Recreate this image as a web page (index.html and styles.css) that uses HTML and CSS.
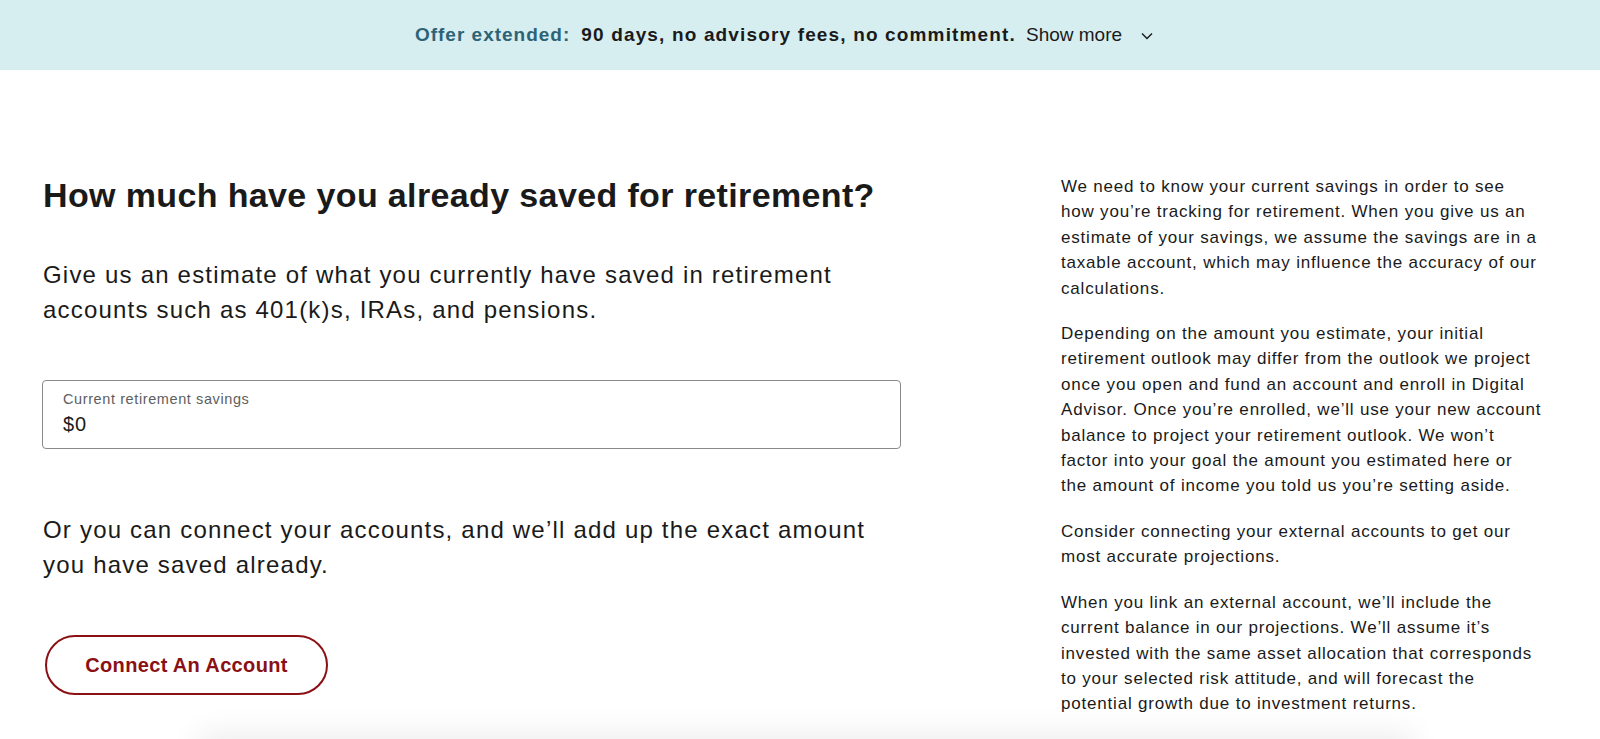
FILE: index.html
```html
<!DOCTYPE html>
<html lang="en">
<head>
<meta charset="utf-8">
<title>Retirement savings</title>
<link rel="stylesheet" href="styles.css">
</head>
<body>
<div class="offer-bar">
  <div class="offer-inner">
    <span class="offer-label">Offer extended:</span>
    <span class="offer-text">90 days, no advisory fees, no commitment.</span>
    <button class="offer-more" type="button">Show more
      <svg class="chev" width="12" height="8" viewBox="0 0 12 8" aria-hidden="true"><path d="M1 1.5 L6 6.5 L11 1.5" fill="none" stroke="#1a1a1a" stroke-width="1.4"/></svg>
    </button>
  </div>
</div>

<main class="page">
  <section class="main-col">
    <h1 class="title">How much have you already saved for retirement?</h1>
    <p class="lead">Give us an estimate of what you currently have saved in retirement<br>accounts such as 401(k)s, IRAs, and pensions.</p>
    <div class="field">
      <span class="field-label">Current retirement savings</span>
      <span class="field-value">$0</span>
    </div>
    <p class="lead lead-2">Or you can connect your accounts, and we’ll add up the exact amount<br>you have saved already.</p>
    <button class="connect-btn" type="button">Connect An Account</button>
  </section>
  <aside class="side-col">
    <p>We need to know your current savings in order to see<br>how you’re tracking for retirement. When you give us an<br>estimate of your savings, we assume the savings are in a<br>taxable account, which may influence the accuracy of our<br>calculations.</p>
    <p>Depending on the amount you estimate, your initial<br>retirement outlook may differ from the outlook we project<br>once you open and fund an account and enroll in Digital<br>Advisor. Once you’re enrolled, we’ll use your new account<br>balance to project your retirement outlook. We won’t<br>factor into your goal the amount you estimated here or<br>the amount of income you told us you’re setting aside.</p>
    <p>Consider connecting your external accounts to get our<br>most accurate projections.</p>
    <p>When you link an external account, we’ll include the<br>current balance in our projections. We’ll assume it’s<br>invested with the same asset allocation that corresponds<br>to your selected risk attitude, and will forecast the<br>potential growth due to investment returns.</p>
  </aside>
</main>
<div class="footer-shadow"></div>
</body>
</html>
```

FILE: styles.css
```css
* { box-sizing: border-box; }

html, body {
  margin: 0;
  padding: 0;
  background: #ffffff;
  color: #1a1a1a;
  font-family: "Liberation Sans", Arial, sans-serif;
  overflow: hidden;
  height: 739px;
}

.offer-bar {
  height: 70px;
  background: #d6eef0;
  display: flex;
  align-items: center;
  justify-content: center;
}

.offer-inner {
  display: flex;
  align-items: center;
  font-size: 19px;
  margin-right: 32px;
}

.offer-label {
  color: #2d6376;
  font-weight: 700;
  letter-spacing: 1px;
  margin-right: 11px;
}

.offer-text {
  font-weight: 700;
  color: #1a1a1a;
  letter-spacing: 1.15px;
  margin-right: 10px;
}

.offer-more {
  border: none;
  background: none;
  padding: 0;
  font: inherit;
  font-size: 19px;
  color: #1a1a1a;
  display: flex;
  align-items: center;
}

.chev {
  margin-left: 19px;
  margin-top: 2px;
}

.page {
  display: grid;
  grid-template-columns: 859px 520px;
  column-gap: 160px;
  padding: 104px 0 0 42px;
  align-items: start;
}

.main-col {
  display: flex;
  flex-direction: column;
  align-items: flex-start;
}

.title {
  margin: 1px 0 0 1px;
  font-size: 34px;
  line-height: 40px;
  font-weight: 700;
  letter-spacing: 0.37px;
  color: #1a1a1a;
}

.lead {
  margin: 43px 0 0 1px;
  font-size: 24px;
  line-height: 34.6px;
  letter-spacing: 1.2px;
  color: #1a1a1a;
  white-space: nowrap;
}

.lead-2 {
  margin-top: 64px;
}

.field {
  margin-top: 53px;
  width: 859px;
  height: 69px;
  border: 1px solid #8a8a8a;
  border-radius: 4px;
  padding: 10px 20px 0 20px;
  display: flex;
  flex-direction: column;
}

.field-label {
  font-size: 14.5px;
  line-height: 16px;
  letter-spacing: 0.6px;
  color: #5e5e5e;
}

.field-value {
  font-size: 20px;
  line-height: 24px;
  letter-spacing: 1px;
  color: #1a1a1a;
  margin-top: 5px;
}

.connect-btn {
  margin: 53px 0 0 3px;
  width: 283px;
  height: 60px;
  border: 2px solid #8b1014;
  border-radius: 30px;
  background: #fff;
  color: #8b1014;
  font-family: "Liberation Sans", Arial, sans-serif;
  font-size: 20px;
  font-weight: 700;
  letter-spacing: 0.35px;
  padding: 0;
}

.side-col {
  padding-left: 0;
}

.side-col p {
  margin: 0 0 20px 0;
  font-size: 17px;
  line-height: 25.4px;
  letter-spacing: 0.8px;
  color: #1a1a1a;
  white-space: nowrap;
}

.footer-shadow {
  position: fixed;
  left: 204px;
  right: 192px;
  bottom: -30px;
  height: 30px;
  background: #fff;
  box-shadow: 0 0 30px 6px rgba(0, 0, 0, 0.07);
}
```
